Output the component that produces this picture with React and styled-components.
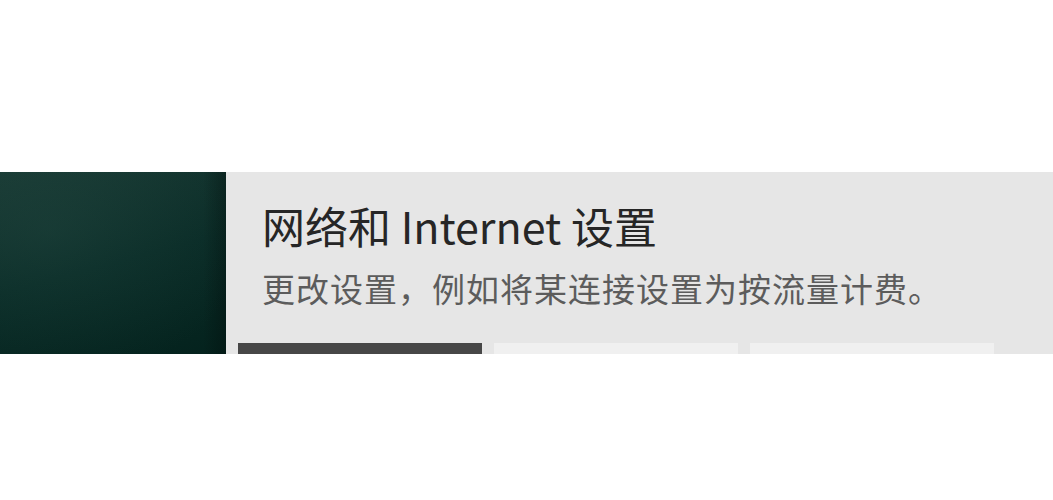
import React from "react";
import styled, { createGlobalStyle } from "styled-components";

const Global = createGlobalStyle`
  html, body { margin: 0; padding: 0; background: #ffffff; }
  body { font-family: "Noto Sans CJK SC", sans-serif; }
`;

const Page = styled.div`
  width: 1053px;
  height: 500px;
  padding-top: 172px;
  box-sizing: border-box;
  background: #ffffff;
`;

const Banner = styled.section`
  display: flex;
  height: 182px;
  overflow: hidden;
`;

const Wallpaper = styled.div`
  width: 226px;
  flex: none;
  background:
    radial-gradient(ellipse 200px 150px at 50px 60px, rgba(50, 90, 82, 0.22), rgba(50, 90, 82, 0) 100%),
    linear-gradient(90deg, rgba(0, 0, 0, 0) 90%, rgba(0, 10, 8, 0.35) 100%),
    linear-gradient(165deg, #183933 0%, #0a2c27 50%, #04221d 100%);
`;

const Panel = styled.div`
  flex: 1;
  background: #e6e6e6;
  padding: 27px 0 0 12px;
  display: flex;
  flex-direction: column;
`;

const TextBlock = styled.div`
  padding-left: 24px;
`;

const Title = styled.h1`
  margin: 0;
  font-family: "Noto Sans CJK SC", sans-serif;
  font-weight: 400;
  font-size: 43px;
  line-height: 52px;
  color: #262626;
  white-space: nowrap;
`;

const Subtitle = styled.p`
  margin: 17px 0 0;
  font-family: "Noto Sans CJK SC", sans-serif;
  font-weight: 400;
  font-size: 33px;
  letter-spacing: 1px;
  line-height: 40px;
  color: #5c5c5c;
  white-space: nowrap;
`;

const Tiles = styled.div`
  display: flex;
  gap: 12px;
  margin-top: 35px;
`;

const Tile = styled.div`
  width: 244px;
  height: 100px;
  flex: none;
  background: ${(p) => (p.$active ? "#474747" : "#f0f0f0")};
`;

export default function App() {
  return (
    <>
      <Global />
      <Page>
        <Banner>
          <Wallpaper />
          <Panel>
            <TextBlock>
              <Title>网络和 Internet 设置</Title>
              <Subtitle>更改设置，例如将某连接设置为按流量计费。</Subtitle>
            </TextBlock>
            <Tiles>
              <Tile $active />
              <Tile />
              <Tile />
            </Tiles>
          </Panel>
        </Banner>
      </Page>
    </>
  );
}
